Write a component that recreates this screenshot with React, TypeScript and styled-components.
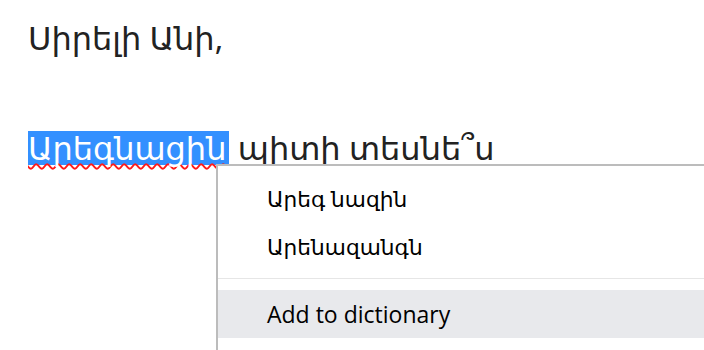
import React from "react";
import styled, { createGlobalStyle } from "styled-components";

const GlobalStyle = createGlobalStyle`
  html, body {
    margin: 0;
    padding: 0;
    background: #ffffff;
    overflow: hidden;
  }
  body {
    width: 704px;
    height: 350px;
  }
`;

const Page = styled.div`
  position: relative;
  width: 704px;
  height: 350px;
  overflow: hidden;
  background: #fff;
`;

const Letter = styled.div`
  padding: 10px 0 0 28px;
  font-family: "Noto Sans", "DejaVu Sans", sans-serif;
  font-size: 32px;
  line-height: 55px;
  color: #222222;
`;

const Line = styled.div`
  height: 55px;
  white-space: nowrap;
`;

const Misspelled = styled.span`
  display: inline-block;
  line-height: 34px;
  height: 34px;
  background: #3390ff;
  color: #ffffff;
  padding-right: 3px;
  text-decoration: underline wavy #ff1a1a;
  text-decoration-thickness: 2px;
  text-decoration-skip-ink: none;
  text-underline-offset: 3px;
`;

const Menu = styled.div`
  position: absolute;
  left: 216px;
  top: 164px;
  width: 520px;
  height: 220px;
  background: #ffffff;
  border: 2px solid #bcbcbc;
  padding-top: 8px;
  font-family: "Open Sans", "Noto Sans", "DejaVu Sans", sans-serif;
  color: #000000;
`;

const Item = styled.div<{ $active?: boolean; $size?: number }>`
  height: 48px;
  display: flex;
  align-items: center;
  padding-left: 49px;
  font-size: ${(p) => p.$size ?? 23}px;
  background: ${(p) => (p.$active ? "#e8e9ec" : "transparent")};
`;

const Separator = styled.div`
  height: 1px;
  background: #e6e6e6;
  margin: 8px 0 11px 0;
`;

export default function App() {
  return (
    <Page>
      <GlobalStyle />
      <Letter>
        <Line>Սիրելի Անի,</Line>
        <Line />
        <Line>
          <Misspelled>Արեգնացին</Misspelled> պիտի տեսնե՞ս
        </Line>
      </Letter>
      <Menu>
        <Item $size={21.7}>Արեգ նազին</Item>
        <Item $size={21.7}>Արենազանգն</Item>
        <Separator />
        <Item $active>Add to dictionary</Item>
      </Menu>
    </Page>
  );
}
